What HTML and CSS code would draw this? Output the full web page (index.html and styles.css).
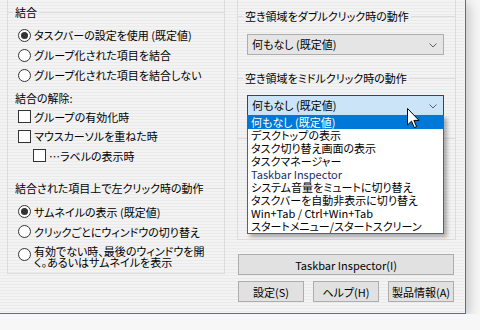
FILE: index.html
```html
<!DOCTYPE html>
<html>
<head>
    <meta charset="utf-8">
    <title>タスクバーの設定</title>
    <link rel="stylesheet" href="styles.css">
</head>
<body>
    <div class="window">
        <div class="col col-left">
            <div class="panel panel-left">
                <div class="legend legend-top"><span>結合</span></div>
                <div class="group">
                    <div class="opt"><span class="radio on"></span>タスクバーの設定を使用 (既定値)</div>
                    <div class="opt"><span class="radio"></span>グループ化された項目を結合</div>
                    <div class="opt"><span class="radio"></span>グループ化された項目を結合しない</div>
                </div>
                <div class="sub">結合の解除:</div>
                <div class="checks">
                    <div class="opt"><span class="box"></span>グループの有効化時</div>
                    <div class="opt"><span class="box"></span>マウスカーソルを重ねた時</div>
                    <div class="opt indent"><span class="box"></span>…ラベルの表示時</div>
                </div>
                <div class="legend legend-click"><span>結合された項目上で左クリック時の動作</span></div>
                <div class="group">
                    <div class="opt"><span class="radio on"></span>サムネイルの表示 (既定値)</div>
                    <div class="opt"><span class="radio"></span>クリックごとにウィンドウの切り替え</div>
                    <div class="opt multi"><span class="radio"></span><span>有効でない時、最後のウィンドウを開<br>く。あるいはサムネイルを表示</span></div>
                </div>
            </div>
        </div>

        <div class="col col-right">
            <div class="panel panel-right">
                <div class="legend legend-dbl"><span>空き領域をダブルクリック時の動作</span></div>
                <div class="combo combo-dbl">
                    何もなし (既定値)
                    <svg class="chevron" width="8" height="5" viewBox="0 0 8 5"><polyline points="0.5,0.5 4,4 7.5,0.5" fill="none" stroke="#606060" stroke-width="1"/></svg>
                </div>
                <div class="legend legend-mid"><span>空き領域をミドルクリック時の動作</span></div>
                <div class="combo-wrap">
                    <div class="combo open">
                        何もなし (既定値)
                        <svg class="chevron" width="8" height="5" viewBox="0 0 8 5"><polyline points="0.5,0.5 4,4 7.5,0.5" fill="none" stroke="#606060" stroke-width="1"/></svg>
                    </div>
                    <ul class="list">
                        <li class="selected">何もなし (既定値)</li>
                        <li>デスクトップの表示</li>
                        <li>タスク切り替え画面の表示</li>
                        <li>タスクマネージャー</li>
                        <li class="latin">Taskbar Inspector</li>
                        <li>システム音量をミュートに切り替え</li>
                        <li>タスクバーを自動非表示に切り替え</li>
                        <li>Win+Tab / Ctrl+Win+Tab</li>
                        <li>スタートメニュー/スタートスクリーン</li>
                    </ul>
                    <svg class="cursor" width="13" height="21" viewBox="0 0 13 21">
                        <path d="M0.5,0.5 V17 L4.5,13.2 L7.3,19.6 L9.6,18.6 L6.9,12.4 H12 Z" fill="#fff" stroke="#000" stroke-width="1" stroke-linejoin="miter"/>
                    </svg>
                </div>
                <div class="rule"></div>
            </div>
            <button class="btn btn-wide">Taskbar Inspector(I)</button>
            <div class="btn-row">
                <button class="btn">設定(S)</button>
                <button class="btn">ヘルプ(H)</button>
                <button class="btn">製品情報(A)</button>
            </div>
        </div>
    </div>
</body>
</html>
```

FILE: styles.css
```css
body {
    margin: 0;
    background-color: #f7f7f7;
    font-family: "Noto Sans CJK JP", sans-serif;
    font-size: 11px;
    font-feature-settings: "palt";
    color: #000;
    overflow: hidden;
}

.window {
    box-sizing: border-box;
    width: 466px;
    height: 314px;
    padding-left: 7px;
    display: flex;
    gap: 12px;
    border-right: 1px solid #2b7bd3;
    border-bottom: 1px solid #2b7bd3;
    background: repeating-linear-gradient(to bottom, #f3f3f3 0, #f3f3f3 2px, #eaeaea 2px, #eaeaea 3px);
    box-shadow: 3px 3px 12px rgba(0, 0, 0, 0.22);
}

.col {
    display: flex;
    flex-direction: column;
}
.col-left {
    width: 218px;
}
.col-right {
    width: 219px;
}

.panel {
    box-sizing: border-box;
    border: 1px solid #dcdcdc;
    border-top: none;
}
.panel-left {
    height: 274px;
}
.panel-right {
    height: 240px;
}

/* group headings with a line through */
.legend {
    display: flex;
    align-items: center;
    height: 13px;
    line-height: 13px;
}
.legend::before {
    content: "";
    width: 5px;
    height: 1px;
    background-color: #dcdcdc;
    margin-right: 2px;
}
.legend::after {
    content: "";
    flex: 1;
    height: 1px;
    background-color: #dcdcdc;
    margin-left: 2px;
}
.legend-top {
    margin-top: 6px;
}
.legend-click {
    margin-top: 16px;
}
.legend-dbl {
    margin-top: 10px;
}
.legend-mid {
    margin-top: 17px;
}

.group {
    margin-top: 6px;
}
.legend-click + .group {
    margin-top: 7px;
}

.opt {
    display: flex;
    align-items: center;
    height: 20px;
    padding-left: 10px;
    white-space: nowrap;
}
.checks .opt {
    height: 19.5px;
}
.opt.indent {
    padding-left: 25px;
}
.opt.multi {
    height: auto;
    align-items: flex-start;
    line-height: 11.5px;
    padding-top: 4px;
}
.opt.multi .radio {
    margin-top: 2px;
}

.radio, .box {
    box-sizing: border-box;
    flex: none;
    width: 13px;
    height: 13px;
    margin-right: 3px;
    border: 1px solid #333;
    background-color: #fff;
}
.radio {
    border-radius: 50%;
    display: flex;
    align-items: center;
    justify-content: center;
}
.radio.on::after {
    content: "";
    width: 7px;
    height: 7px;
    border-radius: 50%;
    background-color: #333;
}

.sub {
    margin-top: 4px;
    height: 18px;
    line-height: 18px;
    padding-left: 7px;
}

/* combo boxes */
.combo {
    box-sizing: border-box;
    position: relative;
    width: 197px;
    height: 21px;
    margin-left: 9px;
    padding-left: 4px;
    line-height: 19px;
    border: 1px solid #adadad;
    background-color: #e5e5e5;
}
.combo-dbl {
    margin-top: 11px;
}
.chevron {
    position: absolute;
    right: 6px;
    top: 8px;
}
.combo-wrap {
    position: relative;
    margin-top: 10px;
}
.combo.open {
    border-color: #005499;
    background-color: #cce4f7;
}

.list {
    position: absolute;
    top: 20px;
    left: 9px;
    width: 197px;
    box-sizing: border-box;
    margin: 0;
    padding: 0;
    list-style: none;
    border: 1px solid #1c6fc8;
    background-color: #fff;
    box-shadow: 3px 3px 4px rgba(0, 0, 0, 0.3);
    z-index: 5;
}
.list li {
    height: 13px;
    line-height: 13px;
    padding-left: 3px;
    white-space: nowrap;
}
.list li.selected {
    background-color: #0078d7;
    color: #fff;
}
.list li.latin {
    color: #1a2f66;
}

.cursor {
    position: absolute;
    left: 169px;
    top: 13px;
    z-index: 6;
}

.rule {
    height: 1px;
    margin-top: 22px;
    background-color: #dcdcdc;
}

/* buttons */
.btn {
    box-sizing: border-box;
    height: 21px;
    padding: 0;
    border: 1px solid #adadad;
    background-color: #e1e1e1;
    font-family: inherit;
    font-size: inherit;
    font-feature-settings: inherit;
    color: #000;
}
.btn-wide {
    width: 216px;
    margin: 14px 0 0 1px;
}
.btn-row {
    display: flex;
    gap: 9px;
    margin: 6px 0 0 1px;
}
.btn-row .btn {
    width: 66px;
}
```
